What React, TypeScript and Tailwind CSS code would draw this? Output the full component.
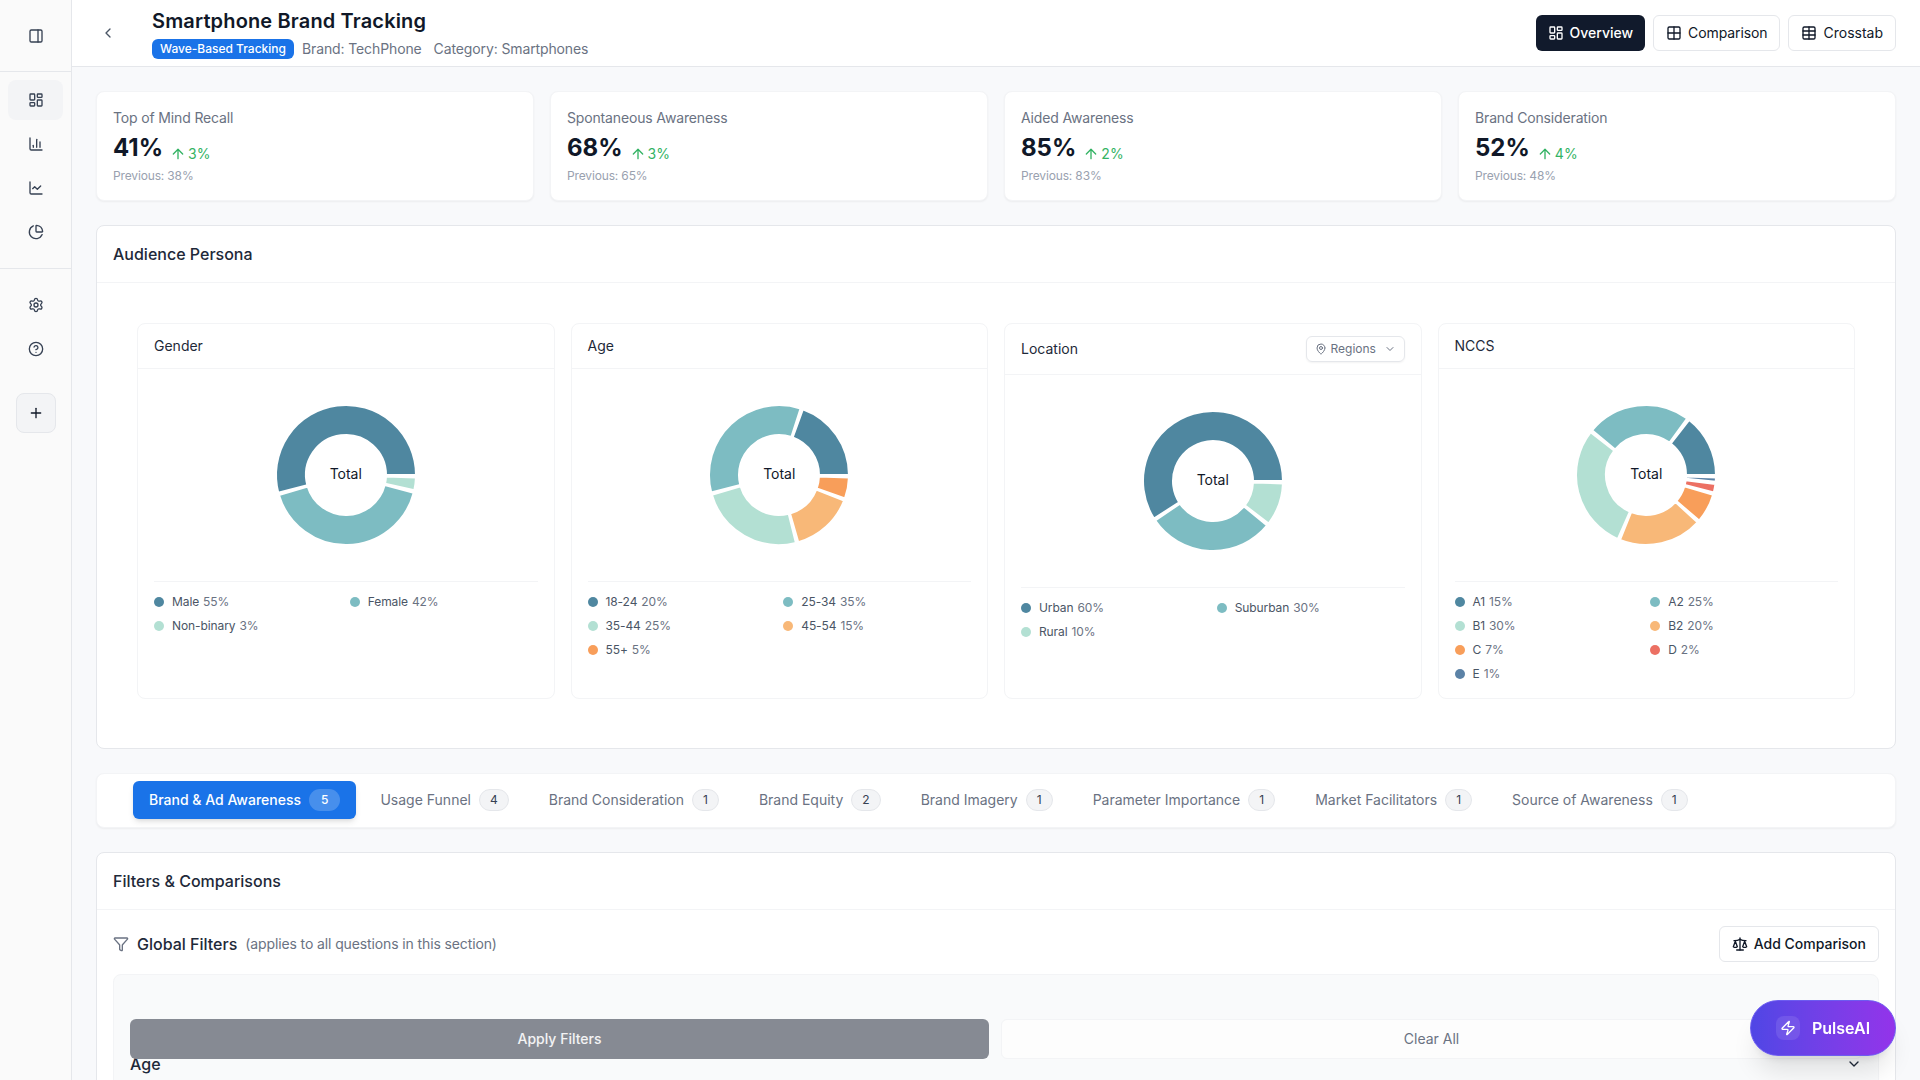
import {
  ArrowUp,
  ChartColumn,
  ChartLine,
  ChartPie,
  ChevronDown,
  ChevronLeft,
  CircleHelp,
  Filter,
  Grid2x2,
  LayoutDashboard,
  MapPin,
  PanelRight,
  Plus,
  Scale,
  Settings,
  Table,
  Zap,
} from 'lucide-react';

const C1 = '#4f87a0';
const C2 = '#7dbcc2';
const C3 = '#b3e0d3';
const C4 = '#f8b878';
const C5 = '#f89e5a';
const C6 = '#ec7063';
const C7 = '#5b82a6';

type Slice = { name: string; value: number; color: string };

const metrics = [
  { label: 'Top of Mind Recall', value: '41%', delta: '3%', prev: 'Previous: 38%' },
  { label: 'Spontaneous Awareness', value: '68%', delta: '3%', prev: 'Previous: 65%' },
  { label: 'Aided Awareness', value: '85%', delta: '2%', prev: 'Previous: 83%' },
  { label: 'Brand Consideration', value: '52%', delta: '4%', prev: 'Previous: 48%' },
];

const gender: Slice[] = [
  { name: 'Male', value: 55, color: C1 },
  { name: 'Female', value: 42, color: C2 },
  { name: 'Non-binary', value: 3, color: C3 },
];
const age: Slice[] = [
  { name: '18-24', value: 20, color: C1 },
  { name: '25-34', value: 35, color: C2 },
  { name: '35-44', value: 25, color: C3 },
  { name: '45-54', value: 15, color: C4 },
  { name: '55+', value: 5, color: C5 },
];
const location: Slice[] = [
  { name: 'Urban', value: 60, color: C1 },
  { name: 'Suburban', value: 30, color: C2 },
  { name: 'Rural', value: 10, color: C3 },
];
const nccs: Slice[] = [
  { name: 'A1', value: 15, color: C1 },
  { name: 'A2', value: 25, color: C2 },
  { name: 'B1', value: 30, color: C3 },
  { name: 'B2', value: 20, color: C4 },
  { name: 'C', value: 7, color: C5 },
  { name: 'D', value: 2, color: C6 },
  { name: 'E', value: 1, color: C7 },
];

const tabs = [
  { name: 'Brand & Ad Awareness', count: 5, active: true },
  { name: 'Usage Funnel', count: 4 },
  { name: 'Brand Consideration', count: 1 },
  { name: 'Brand Equity', count: 2 },
  { name: 'Brand Imagery', count: 1 },
  { name: 'Parameter Importance', count: 1 },
  { name: 'Market Facilitators', count: 1 },
  { name: 'Source of Awareness', count: 1 },
];

const polar = (r: number, deg: number) => {
  const a = (deg * Math.PI) / 180;
  return `${(90 + r * Math.cos(a)).toFixed(3)} ${(90 - r * Math.sin(a)).toFixed(3)}`;
};

function Donut({ data }: { data: Slice[] }) {
  const pad = 2;
  const outer = 70;
  const inner = 40;
  const free = 360 - data.length * pad;
  let start = 0;
  const paths = data.map((d) => {
    const sweep = (free * d.value) / 100;
    const end = start + sweep;
    const large = sweep > 180 ? 1 : 0;
    const path = `M ${polar(outer, start)} A ${outer} ${outer} 0 ${large} 0 ${polar(outer, end)} L ${polar(inner, end)} A ${inner} ${inner} 0 ${large} 1 ${polar(inner, start)} Z`;
    start = end + pad;
    return <path key={d.name} d={path} fill={d.color} stroke="#ffffff" strokeWidth={2} />;
  });
  return (
    <div className="relative h-[180px] flex items-center justify-center">
      <svg width="180" height="180" viewBox="0 0 180 180">
        {paths}
      </svg>
      <span className="absolute -mt-0.5 text-sm text-gray-900">Total</span>
    </div>
  );
}

function ChartCard({ title, data, action }: { title: string; data: Slice[]; action?: boolean }) {
  return (
    <div className="bg-white border border-gray-100 rounded-lg">
      <div className="flex items-center justify-between px-4 py-3 border-b border-gray-100">
        <h3 className="text-sm leading-5 text-gray-800">{title}</h3>
        {action && (
          <button className="h-[26px] w-[99px] pl-2 pr-2 flex items-center gap-1 border border-gray-200 rounded-md text-xs text-gray-500 shadow-xs">
            <MapPin className="w-3 h-3 shrink-0" />
            <span>Regions</span>
            <ChevronDown className="w-3 h-3 ml-auto shrink-0" />
          </button>
        )}
      </div>
      <div className="p-4">
        <Donut data={data} />
        <div className="mt-4 pt-3 border-t border-gray-100 grid grid-cols-2 gap-2">
          {data.map((d) => (
            <div key={d.name} className="flex items-center gap-2 h-4 text-xs tracking-[-0.1px]">
              <span className="w-2.5 h-2.5 rounded-full shrink-0" style={{ backgroundColor: d.color }} />
              <span className="text-gray-600">{d.name}</span>
              <span className="-ml-1 text-gray-500">{d.value}%</span>
            </div>
          ))}
        </div>
      </div>
    </div>
  );
}

export default function App() {
  return (
    <div className="h-screen flex overflow-hidden bg-[#f8f9fb] text-gray-900 font-['Inter',sans-serif]">
      {/* Sidebar */}
      <aside className="w-[72px] shrink-0 bg-[#fafafa] border-r border-gray-200 text-gray-700">
        <div className="h-[72px] flex items-center justify-center border-b border-gray-200">
          <PanelRight className="w-4 h-4" />
        </div>
        <div className="px-2 pt-2 pb-4 flex flex-col gap-1 border-b border-gray-200">
          <div className="h-10 flex items-center justify-center rounded-lg bg-gray-100">
            <LayoutDashboard className="w-4 h-4" />
          </div>
          <div className="h-10 flex items-center justify-center">
            <ChartColumn className="w-4 h-4" />
          </div>
          <div className="h-10 flex items-center justify-center">
            <ChartLine className="w-4 h-4" />
          </div>
          <div className="h-10 flex items-center justify-center">
            <ChartPie className="w-4 h-4" />
          </div>
        </div>
        <div className="px-2 pt-4 flex flex-col gap-1">
          <div className="h-10 flex items-center justify-center">
            <Settings className="w-4 h-4" />
          </div>
          <div className="h-10 flex items-center justify-center">
            <CircleHelp className="w-4 h-4" />
          </div>
          <button className="mt-5 mx-auto w-10 h-10 flex items-center justify-center rounded-lg bg-gray-100 border border-gray-200 text-gray-900">
            <Plus className="w-4 h-4" />
          </button>
        </div>
      </aside>

      <div className="flex-1 min-w-0 flex flex-col">
        {/* Header */}
        <header className="h-[67px] shrink-0 bg-white border-b border-gray-200 flex items-center pl-4 pr-6">
          <button className="w-10 h-10 flex items-center justify-center text-gray-600">
            <ChevronLeft className="w-4 h-4" />
          </button>
          <div className="ml-6">
            <h1 className="text-xl font-semibold leading-7 tracking-[0.15px] text-gray-900">Smartphone Brand Tracking</h1>
            <div className="mt-1 flex items-center text-sm tracking-[-0.12px] text-gray-500">
              <span className="h-5 px-2 flex items-center rounded-md bg-[#1a73e8] text-xs tracking-normal font-medium text-white">
                Wave-Based Tracking
              </span>
              <span className="ml-2">Brand: TechPhone</span>
              <span className="ml-3">Category: Smartphones</span>
            </div>
          </div>
          <div className="ml-auto flex items-center gap-2 text-sm">
            <button className="h-9 px-3 flex items-center gap-1.5 rounded-md bg-[#111a2c] font-medium text-white">
              <LayoutDashboard className="w-4 h-4" />
              Overview
            </button>
            <button className="h-9 px-3 flex items-center gap-1.5 rounded-md bg-white border border-gray-200 tracking-[-0.1px] text-gray-900">
              <Grid2x2 className="w-4 h-4" />
              Comparison
            </button>
            <button className="h-9 px-3 flex items-center gap-1.5 rounded-md bg-white border border-gray-200 text-gray-900">
              <Table className="w-4 h-4" />
              Crosstab
            </button>
          </div>
        </header>

        <main className="flex-1 min-h-0 overflow-hidden p-6 flex flex-col gap-6">
          {/* Metric cards */}
          <div className="grid grid-cols-4 gap-4 shrink-0">
            {metrics.map((m) => (
              <div key={m.label} className="h-[110px] bg-white border border-gray-100 rounded-lg shadow-xs p-4">
                <p className="text-sm leading-5 tracking-[-0.15px] text-gray-500">{m.label}</p>
                <div className="mt-1 flex items-end gap-[7px]">
                  <span className="text-2xl font-bold leading-8 text-gray-900">{m.value}</span>
                  <span className="flex items-center gap-0.5 text-sm leading-5 text-[#34b364]">
                    <ArrowUp className="w-4 h-4" />
                    {m.delta}
                  </span>
                </div>
                <p className="mt-1 text-xs leading-4 tracking-[-0.15px] text-gray-400">{m.prev}</p>
              </div>
            ))}
          </div>

          {/* Audience persona */}
          <section className="shrink-0 bg-white border border-gray-200 rounded-lg">
            <div className="h-[57px] px-4 flex items-center border-b border-gray-100">
              <h2 className="text-base font-medium text-gray-800">Audience Persona</h2>
            </div>
            <div className="px-10 pt-10 pb-[49px] grid grid-cols-4 gap-4 items-stretch">
              <ChartCard title="Gender" data={gender} />
              <ChartCard title="Age" data={age} />
              <ChartCard title="Location" data={location} action />
              <ChartCard title="NCCS" data={nccs} />
            </div>
          </section>

          {/* Section tabs */}
          <div className="shrink-0 h-[55px] bg-white border border-gray-100 rounded-lg shadow-xs pl-9 pb-px flex items-center gap-2">
            {tabs.map((t) => (
              <button
                key={t.name}
                className={`h-[38px] px-4 flex items-center gap-2 rounded-md text-sm ${
                  t.active ? 'bg-[#1a73e8] font-medium text-white shadow-md' : 'text-gray-500'
                }`}
              >
                {t.name}
                <span
                  className={`h-[22px] flex items-center rounded-full border text-xs ${
                    t.active ? 'px-[11px] bg-white/20 border-transparent text-white' : 'px-2.5 bg-gray-100 border-gray-200 text-gray-700'
                  }`}
                >
                  {t.count}
                </span>
              </button>
            ))}
          </div>

          {/* Filters */}
          <section className="shrink-0 bg-white border border-gray-200 rounded-lg">
            <div className="h-[57px] px-4 flex items-center border-b border-gray-100">
              <h2 className="text-base font-medium text-gray-800">Filters &amp; Comparisons</h2>
            </div>
            <div className="p-4">
              <div className="flex items-center justify-between">
                <div className="flex items-center">
                  <Filter className="w-4 h-4 text-gray-500" />
                  <span className="ml-2 text-base font-medium text-gray-800">Global Filters</span>
                  <span className="ml-2 text-sm tracking-[-0.12px] text-gray-500">(applies to all questions in this section)</span>
                </div>
                <button className="h-9 px-3 flex items-center gap-1.5 bg-white border border-gray-200 rounded-md text-sm font-medium text-gray-900">
                  <Scale className="w-4 h-4" />
                  Add Comparison
                </button>
              </div>
              <div className="relative mt-3 bg-[#f9fafb] border border-gray-100 rounded-lg px-4 pt-[77px] pb-4">
                <div className="absolute left-4 right-4 top-11 flex gap-3">
                  <button className="flex-1 h-10 rounded-md bg-[#868a93] text-sm font-medium text-white/90">
                    Apply Filters
                  </button>
                  <button className="flex-1 h-10 rounded-md bg-[#fdfdfd] border border-gray-100 text-sm text-gray-500">
                    Clear All
                  </button>
                </div>
                <div className="flex items-center justify-between h-6">
                  <span className="text-base font-medium text-gray-800">Age</span>
                  <ChevronDown className="w-4 h-4 text-gray-800" />
                </div>
              </div>
            </div>
          </section>
        </main>
      </div>

      {/* PulseAI launcher */}
      <button className="fixed right-6 bottom-6 h-14 w-[146px] pl-[25px] flex items-center gap-3 rounded-full bg-gradient-to-r from-[#4f46e5] to-[#9333ea] border border-[#6d5cf0] shadow-xl text-base font-semibold text-white">
        <span className="w-6 h-6 flex items-center justify-center rounded-lg bg-white/10">
          <Zap className="w-4 h-4" />
        </span>
        PulseAI
      </button>
    </div>
  );
}
